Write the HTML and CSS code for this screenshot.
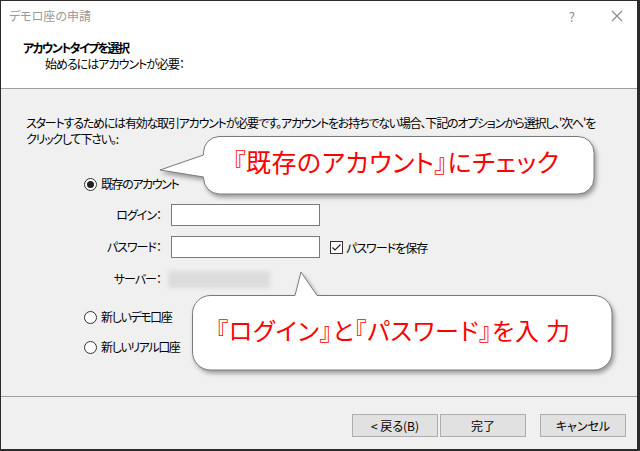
FILE: index.html
```html
<!DOCTYPE html>
<html lang="ja">
<head>
<meta charset="utf-8">
<title>デモ口座の申請</title>
<link rel="stylesheet" href="styles.css">
</head>
<body>
<div class="window">
  <div class="titlebar">
    <span class="title">デモロ座の申請</span>
    <span class="help">?</span>
    <svg class="close" width="12" height="12" viewBox="0 0 12 12"><path d="M1 1L11 11M11 1L1 11" stroke="#8a8a8a" stroke-width="1.1" fill="none"/></svg>
  </div>
  <div class="header">
    <div class="h-title">アカウントタイプを選択</div>
    <div class="h-sub">始めるにはアカウントが必要：</div>
  </div>
  <div class="content">
    <p class="intro">スタートするためには有効な取引アカウントが必要です。アカウントをお持ちでない場合、下記のオプションから選択し、'次へ'を<br>クリックして下さい。:</p>
    <label class="radio-row first"><span class="radio checked"></span>既存のアカウント</label>
    <div class="form">
      <span class="lbl">ログイン：</span>
      <span class="input"></span>
      <span></span>
      <span class="lbl">パスワード：</span>
      <span class="input"></span>
      <span class="save"><span class="check"><svg width="11" height="11" viewBox="0 0 11 11"><path d="M1.5 5.5L4 8L9.5 2.5" stroke="#222" stroke-width="1.2" fill="none"/></svg></span>パスワードを保存</span>
      <span class="lbl">サーバー：</span>
      <span class="server"></span>
      <span></span>
    </div>
    <label class="radio-row demo"><span class="radio"></span>新しいデモ口座</label>
    <label class="radio-row real"><span class="radio"></span>新しいリアル口座</label>
  </div>
  <div class="footer">
    <button class="btn">&lt; 戻る(B)</button>
    <button class="btn">完了</button>
    <button class="btn cancel">キャンセル</button>
  </div>

  <div class="callout c1">
    <svg width="450" height="75" viewBox="0 0 450 75"><path d="M64 6.5H423A16 16 0 0 1 439 22.5V48A16 16 0 0 1 423 64H64A16 16 0 0 1 48.5 48V47L5 40L48.5 25V22.5A16 16 0 0 1 64 6.5Z" fill="#fff" stroke="#7a7a7a" stroke-width="1"/></svg>
    <div class="c-text t1">『既存のアカウント』にチェック</div>
  </div>
  <div class="callout c2">
    <svg width="435" height="112" viewBox="0 0 435 112"><path d="M25 30.5H110L116 7L132 30.5H409A18 18 0 0 1 427 48.5V87A18 18 0 0 1 409 105H25A18 18 0 0 1 7.5 87V48.5A18 18 0 0 1 25 30.5Z" fill="#fff" stroke="#7a7a7a" stroke-width="1"/></svg>
    <div class="c-text t2">『ログイン』と『パスワード』を入 力</div>
  </div>
</div>
</body>
</html>
```
FILE: styles.css
```css
* { box-sizing: border-box; }
html, body { margin: 0; padding: 0; }
body {
  background: #2b2b2b;
  width: 640px;
  height: 451px;
  padding: 1px 3px 2px 1px;
  font-family: "Noto Sans CJK JP", sans-serif;
  font-size: 12px;
  color: #000;
  font-feature-settings: "palt";
  overflow: hidden;
}
.window {
  position: relative;
  width: 636px;
  height: 448px;
  background: #f0f0f0;
  display: flex;
  flex-direction: column;
}
.titlebar {
  height: 30px;
  background: #fff;
  display: flex;
  align-items: center;
  padding-left: 8px;
}
.title { color: #9a9a9a; font-size: 12px; line-height: 16px; }
.help { margin-left: auto; color: #8a8a8a; font-size: 13px; margin-right: 36px; }
.close { margin-right: 14px; }
.header {
  height: 58px;
  background: #fff;
  border-bottom: 1px solid #a0a0a0;
  padding: 9px 0 0 22px;
}
.h-title { font-weight: bold; line-height: 16px; letter-spacing: -1.6px; }
.h-sub { line-height: 15px; padding-left: 22px; letter-spacing: -1px; }
.content {
  flex: 1;
  padding: 26px 0 0 25px;
  border-bottom: 1px solid #a0a0a0;
}
.intro {
  margin: 0;
  line-height: 15.5px;
  white-space: nowrap;
  letter-spacing: -1.2px;
}
.radio-row {
  display: flex;
  align-items: center;
  height: 16px;
  margin-left: 58px;
  line-height: 16px;
  letter-spacing: -1.4px;
}
.radio-row.first { margin-top: 30px; }
.radio-row.demo { margin-top: 19px; }
.radio-row.real { margin-top: 14px; }
.radio {
  width: 13px;
  height: 13px;
  border: 1px solid #333;
  border-radius: 50%;
  background: #fff;
  margin-right: 4px;
  display: flex;
  align-items: center;
  justify-content: center;
}
.radio.checked::after {
  content: "";
  width: 7px;
  height: 7px;
  border-radius: 50%;
  background: #222;
}
.form {
  display: grid;
  grid-template-columns: 61px 149px auto;
  grid-template-rows: 22px 22px 22px;
  column-gap: 10px;
  row-gap: 10px;
  align-items: center;
  margin: 12px 0 0 74px;
}
.form > .lbl { text-align: right; line-height: 16px; letter-spacing: -1px; }
.input {
  height: 22px;
  background: #fff;
  border: 1px solid #7a7a7a;
}
.server {
  height: 17px;
  width: 102px;
  margin-left: -3px;
  background: #dcdcdc;
  filter: blur(2px);
}
.save { display: flex; align-items: center; letter-spacing: -1px; }
.check {
  width: 13px;
  height: 13px;
  border: 1px solid #333;
  background: #fff;
  margin-right: 3px;
  display: flex;
  align-items: center;
  justify-content: center;
}
.footer {
  height: 52px;
  display: flex;
  padding: 17px 0 0 351px;
}
.btn {
  width: 86px;
  height: 23px;
  background: #e1e1e1;
  border: 1px solid #adadad;
  font-family: "Noto Sans CJK JP", sans-serif;
  font-size: 12px;
  font-feature-settings: "palt";
  letter-spacing: 0;
  padding: 0;
  margin-right: 2px;
  color: #000;
}
.btn.cancel { margin-left: 12px; }
.callout {
  position: absolute;
}
.callout svg {
  display: block;
  filter: drop-shadow(2px 3px 2px rgba(0,0,0,0.35));
}
.c1 { left: 154px; top: 129px; width: 450px; height: 75px; }
.c2 { left: 184px; top: 264px; width: 435px; height: 112px; }
.c-text {
  position: absolute;
  color: #ff0000;
  white-space: nowrap;
  line-height: 30px;
}
.t1 { left: 78px; top: 16px; font-size: 25px; letter-spacing: 0.5px; }
.t2 { left: 31px; top: 50px; font-size: 24px; letter-spacing: 0.8px; }
```
